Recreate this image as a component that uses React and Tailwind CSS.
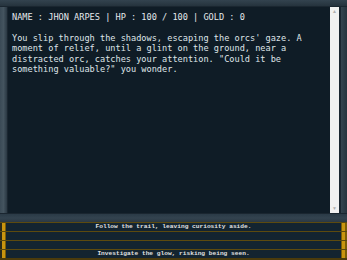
import React from 'react';

const choices = [
    'Follow the trail, leaving curiosity aside.',
    '',
    '',
    'Investigate the glow, risking being seen.',
];

const ChoiceRow = ({ text }) => (
    <div className="flex h-[9px] border-t border-[#5c4a0e] bg-[#132430]">
        <div className="w-[2px] bg-[#2a2a1a]" />
        <div className="w-[4px] bg-[#c8940f] border-r border-[#7a5d08]" />
        <div
            className="flex-1 flex items-center justify-center text-[6.2px] leading-none text-[#e0e0e0]"
            style={{ fontFamily: '"Liberation Mono", monospace', fontWeight: 700 }}
        >
            {text}
        </div>
        <div className="w-[4px] bg-[#c8940f] border-l border-[#7a5d08]" />
        <div className="w-[2px] bg-[#7a5d08]" />
    </div>
);

export default function App() {
    return (
        <div className="w-[347px] h-[260px] overflow-hidden bg-[#2b3b47] flex flex-col">
            {/* top band */}
            <div className="h-[7px] shrink-0 bg-gradient-to-b from-[#33434f] to-[#25333d] border-b border-[#1a2630]" />
            <div className="flex h-[206px] shrink-0">
                {/* left frame */}
                <div className="w-[8px] shrink-0 bg-gradient-to-r from-[#3a4a56] via-[#44545f] to-[#2a3843] border-r border-[#1a2630]" />
                {/* main text panel */}
                <div
                    className="w-[322px] shrink-0 bg-[#0f1c26] pl-[4px] pt-[5px] text-[8.6px] leading-[10.5px] text-[#dfe4e8]"
                    style={{ fontFamily: '"DejaVu Sans Mono", monospace' }}
                >
                    <div className="text-[#e4e8ec]">NAME : JHON ARPES | HP : 100 / 100 | GOLD : 0</div>
                    <div className="mt-[10px] pr-[14px]">
                        You slip through the shadows, escaping the orcs' gaze. A moment of relief, until a glint on the ground, near a distracted orc, catches your attention. "Could it be something valuable?" you wonder.
                    </div>
                </div>
                {/* scrollbar */}
                <div className="w-[9px] shrink-0 bg-[#f1f1f1] flex flex-col justify-between items-center text-[5px] leading-none text-[#b0b0b0] py-[2px]">
                    <span>▲</span>
                    <span>▼</span>
                </div>
                <div className="w-[2px] shrink-0 bg-[#1a2630]" />
                <div className="flex-1 bg-gradient-to-r from-[#34444f] to-[#26343e]" />
            </div>
            {/* separator band */}
            <div className="h-[9px] shrink-0 bg-gradient-to-b from-[#2a3a46] via-[#33434f] to-[#2a3843] border-t border-[#1a2630]" />
            {/* choices */}
            <div className="flex flex-col shrink-0">
                {choices.map((c, i) => (
                    <ChoiceRow key={i} text={c} />
                ))}
                <div className="h-[2px] bg-[#4a3b0c]" />
            </div>
        </div>
    );
}
